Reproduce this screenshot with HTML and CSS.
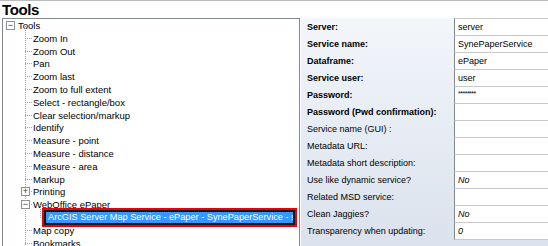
FILE: index.html
```html
<!DOCTYPE html>
<html lang="en">

<head>
    <meta charset="UTF-8">
    <title>Tools</title>
    <link rel="stylesheet" href="styles.css">
</head>

<body>
    <header class="title">
        <h1>Tools</h1>
    </header>

    <main class="main">
        <section class="tree">
            <div class="node root">
                <span class="box">&minus;</span>
                <span class="label">Tools</span>
            </div>
            <ul class="children">
                <li class="leaf">Zoom In</li>
                <li class="leaf">Zoom Out</li>
                <li class="leaf">Pan</li>
                <li class="leaf">Zoom last</li>
                <li class="leaf">Zoom to full extent</li>
                <li class="leaf">Select - rectangle/box</li>
                <li class="leaf">Clear selection/markup</li>
                <li class="leaf">Identify</li>
                <li class="leaf">Measure - point</li>
                <li class="leaf">Measure - distance</li>
                <li class="leaf">Measure - area</li>
                <li class="leaf">Markup</li>
                <li class="branch"><span class="box">+</span>Printing</li>
                <li class="branch"><span class="box">&minus;</span>WebOffice ePaper</li>
                <li class="sub">
                    <span class="selected">ArcGIS Server Map Service - ePaper - SynePaperService - server</span>
                </li>
                <li class="leaf">Map copy</li>
                <li class="leaf">Bookmarks</li>
            </ul>
        </section>

        <section class="props">
            <div class="row"><span class="key bold">Server:</span><span class="val">server</span></div>
            <div class="row"><span class="key bold">Service name:</span><span class="val">SynePaperService</span></div>
            <div class="row"><span class="key bold">Dataframe:</span><span class="val">ePaper</span></div>
            <div class="row"><span class="key bold">Service user:</span><span class="val">user</span></div>
            <div class="row"><span class="key bold">Password:</span><span class="val pwd">********</span></div>
            <div class="row"><span class="key bold">Password (Pwd confirmation):</span><span class="val"></span></div>
            <div class="row"><span class="key">Service name (GUI) :</span><span class="val"></span></div>
            <div class="row"><span class="key">Metadata URL:</span><span class="val"></span></div>
            <div class="row"><span class="key">Metadata short description:</span><span class="val"></span></div>
            <div class="row"><span class="key">Use like dynamic service?</span><span class="val it">No</span></div>
            <div class="row"><span class="key">Related MSD service:</span><span class="val"></span></div>
            <div class="row"><span class="key">Clean Jaggies?</span><span class="val it">No</span></div>
            <div class="row"><span class="key">Transparency when updating:</span><span class="val it">0</span></div>
        </section>
    </main>
</body>

</html>
```

FILE: styles.css
```css
body {
    margin: 0;
    padding: 0;
    width: 548px;
    height: 246px;
    overflow: hidden;
    background-color: #fff;
    font-family: "Liberation Sans", Arial, sans-serif;
    font-size: 9px;
    color: #000;
}

.title {
    border-top: 1px solid #bcbcbc;
    height: 17px;
}

.title h1 {
    margin: 0;
    padding-left: 2px;
    font-size: 15px;
    line-height: 17px;
    font-weight: bold;
    letter-spacing: -0.4px;
}

.main {
    display: flex;
    height: 228px;
}

.tree {
    width: 296px;
    margin-left: 2px;
    border: 1px solid #828790;
    border-bottom: none;
    overflow: hidden;
    white-space: nowrap;
    font-size: 9.5px;
}

.node,
.children li {
    height: 12.8px;
    line-height: 13px;
    position: relative;
}

.root {
    padding-left: 15px;
}

.root .box {
    left: 3px;
}

.box {
    position: absolute;
    top: 2px;
    width: 7px;
    height: 7px;
    border: 1px solid #919191;
    background: #fff;
    color: #333;
    font-size: 9px;
    line-height: 7px;
    text-align: center;
}

.children {
    list-style: none;
    margin: 0;
    padding: 0 0 0 30px;
    position: relative;
}

.children::before {
    content: "";
    position: absolute;
    left: 22px;
    top: -6px;
    bottom: 0;
    border-left: 1px dotted #a0a0a0;
}

.leaf::before,
.branch::before {
    content: "";
    position: absolute;
    left: -8px;
    top: 6px;
    width: 7px;
    border-top: 1px dotted #a0a0a0;
}

.branch .box {
    left: -12px;
    z-index: 1;
}

.sub {
    padding-left: 13px;
}

.sub::before {
    content: "";
    position: absolute;
    left: 7px;
    top: -6px;
    height: 12px;
    width: 6px;
    border-left: 1px dotted #a0a0a0;
    border-bottom: 1px dotted #a0a0a0;
}

.selected {
    display: inline-block;
    position: relative;
    top: 1px;
    background-color: #3399ff;
    color: #fff;
    padding: 0 2px;
    outline: 1px dotted #000;
    box-shadow: 0 0 0 2px #1a1a1a, 0 0 0 4px #e8000b;
    width: 243px;
    overflow: hidden;
    height: 11px;
    line-height: 11px;
    font-size: 9.2px;
}

.props {
    flex: 1;
    margin-left: 1px;
    background: linear-gradient(#f3f6fa, #dae2ed);
}

.row {
    display: grid;
    grid-template-columns: 153px 1fr;
    height: 17px;
}

.key {
    padding-top: 2px;
    line-height: 15px;
    padding-left: 6px;
    white-space: nowrap;
}

.bold {
    font-weight: bold;
}

.val {
    background: #fff;
    border-left: 1px solid #828790;
    border-top: 1px solid #c9c9c9;
    padding-top: 1px;
    line-height: 15px;
    padding-left: 3px;
}

.row:last-child .val {
    border-bottom: 1px solid #c9c9c9;
}

.it {
    font-style: italic;
}

.pwd {
    font-size: 7px;
    line-height: 11px;
    letter-spacing: -0.5px;
}
```
